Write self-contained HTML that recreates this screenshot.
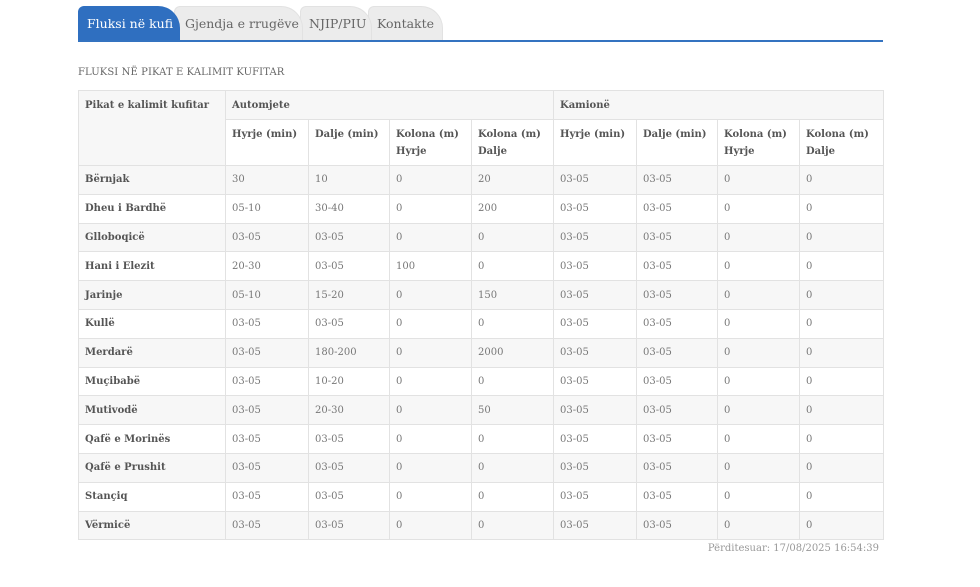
<!DOCTYPE html>
<html><head><meta charset="utf-8"><style>
body{margin:0;background:#fff;font-family:"DejaVu Serif","Liberation Serif",serif;color:#555;}
.tabs{position:absolute;left:78px;top:6px;width:805px;height:34px;border-bottom:2px solid #3473c0;}
.tab{position:absolute;top:0;height:34px;line-height:34px;font-size:12.5px;color:#666;background:#ececec;border-radius:6px 22px 0 0;padding-left:8px;box-sizing:border-box;border:1px solid #e2e2e2;border-bottom:none;white-space:nowrap;overflow:hidden}
.tab.a{background:#2f6fc0;color:#fff;border-color:#2f6fc0;padding-left:8px}
.title{position:absolute;left:78px;top:67px;font-size:10px;color:#666;letter-spacing:0.1px}
table{position:absolute;left:78px;top:90px;width:805px;border-collapse:collapse;font-size:10px;table-layout:fixed}
td,th{border:1px solid #e2e2e2;padding:0 6px;text-align:left;vertical-align:middle;color:#777;font-weight:normal;box-sizing:border-box}
tr{height:28.8px}
tr.h1{height:29px}
tr.h2{height:46px}
th{color:#555;font-weight:bold;vertical-align:top;padding-top:6px;line-height:17px}
td:first-child{font-weight:bold;color:#555}
tr.g td{background:#f7f7f7}
.ft{position:absolute;right:101px;top:543px;font-size:10px;color:#999}
</style></head><body>
<div class="tabs">
<div class="tab" style="left:290px;width:75px">Kontakte</div>
<div class="tab" style="left:222px;width:72px">NJIP/PIU</div>
<div class="tab" style="left:96px;width:129px;padding-left:10px">Gjendja e rrugëve</div>
<div class="tab a" style="left:0;width:102px">Fluksi në kufi</div>
</div>
<div class="title">FLUKSI NË PIKAT E KALIMIT KUFITAR</div>
<table>
<colgroup><col style="width:147px"><col style="width:83px"><col style="width:81px"><col style="width:82px"><col style="width:82px"><col style="width:83px"><col style="width:81px"><col style="width:82px"><col style="width:84px"></colgroup>
<tr class="h1"><th rowspan="2" style="background:#f7f7f7">Pikat e kalimit kufitar</th><th colspan="4" style="background:#f7f7f7">Automjete</th><th colspan="4" style="background:#f7f7f7">Kamionë</th></tr>
<tr class="h2"><th>Hyrje (min)</th><th>Dalje (min)</th><th>Kolona (m) Hyrje</th><th>Kolona (m) Dalje</th><th>Hyrje (min)</th><th>Dalje (min)</th><th>Kolona (m) Hyrje</th><th>Kolona (m) Dalje</th></tr>
<tr class="g"><td>Bërnjak</td><td>30</td><td>10</td><td>0</td><td>20</td><td>03-05</td><td>03-05</td><td>0</td><td>0</td></tr>
<tr><td>Dheu i Bardhë</td><td>05-10</td><td>30-40</td><td>0</td><td>200</td><td>03-05</td><td>03-05</td><td>0</td><td>0</td></tr>
<tr class="g"><td>Glloboqicë</td><td>03-05</td><td>03-05</td><td>0</td><td>0</td><td>03-05</td><td>03-05</td><td>0</td><td>0</td></tr>
<tr><td>Hani i Elezit</td><td>20-30</td><td>03-05</td><td>100</td><td>0</td><td>03-05</td><td>03-05</td><td>0</td><td>0</td></tr>
<tr class="g"><td>Jarinje</td><td>05-10</td><td>15-20</td><td>0</td><td>150</td><td>03-05</td><td>03-05</td><td>0</td><td>0</td></tr>
<tr><td>Kullë</td><td>03-05</td><td>03-05</td><td>0</td><td>0</td><td>03-05</td><td>03-05</td><td>0</td><td>0</td></tr>
<tr class="g"><td>Merdarë</td><td>03-05</td><td>180-200</td><td>0</td><td>2000</td><td>03-05</td><td>03-05</td><td>0</td><td>0</td></tr>
<tr><td>Muçibabë</td><td>03-05</td><td>10-20</td><td>0</td><td>0</td><td>03-05</td><td>03-05</td><td>0</td><td>0</td></tr>
<tr class="g"><td>Mutivodë</td><td>03-05</td><td>20-30</td><td>0</td><td>50</td><td>03-05</td><td>03-05</td><td>0</td><td>0</td></tr>
<tr><td>Qafë e Morinës</td><td>03-05</td><td>03-05</td><td>0</td><td>0</td><td>03-05</td><td>03-05</td><td>0</td><td>0</td></tr>
<tr class="g"><td>Qafë e Prushit</td><td>03-05</td><td>03-05</td><td>0</td><td>0</td><td>03-05</td><td>03-05</td><td>0</td><td>0</td></tr>
<tr><td>Stançiq</td><td>03-05</td><td>03-05</td><td>0</td><td>0</td><td>03-05</td><td>03-05</td><td>0</td><td>0</td></tr>
<tr class="g"><td>Vërmicë</td><td>03-05</td><td>03-05</td><td>0</td><td>0</td><td>03-05</td><td>03-05</td><td>0</td><td>0</td></tr>
</table>
<div class="ft">Përditesuar: 17/08/2025 16:54:39</div>
</body></html>
